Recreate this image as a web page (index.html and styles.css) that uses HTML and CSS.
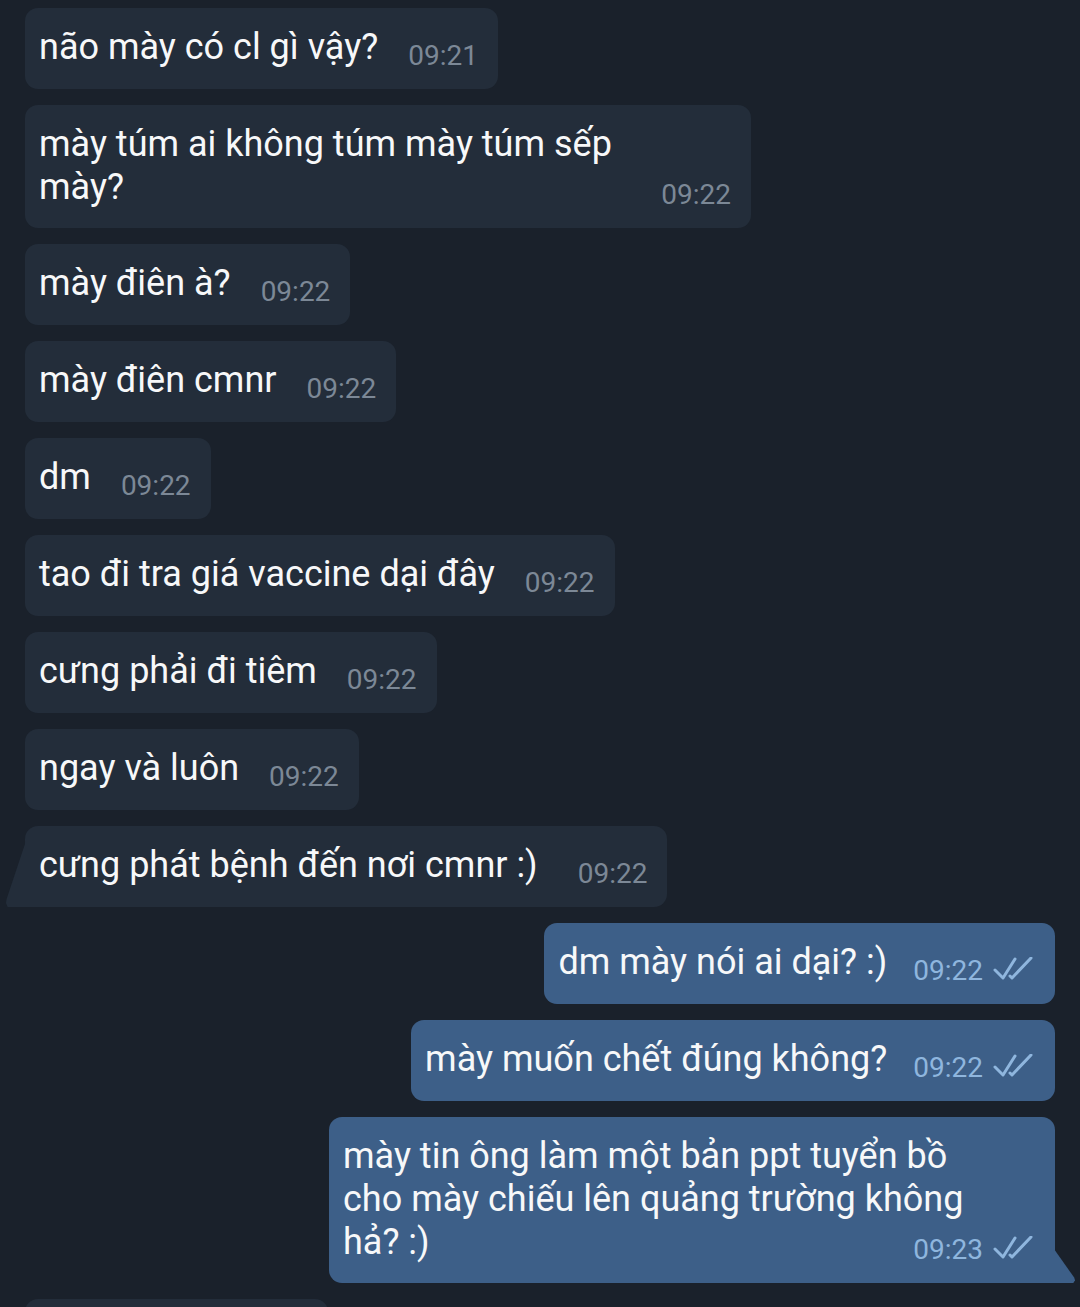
FILE: index.html
```html
<!DOCTYPE html>
<html lang="vi">
<head>
<meta charset="utf-8">
<title>Chat</title>
<link rel="stylesheet" href="styles.css">
</head>
<body>
<main class="chat">
  <div class="row in"><div class="bubble"><span class="text">não mày có cl gì vậy?</span><span class="meta"><span class="time">09:21</span></span></div></div>
  <div class="row in"><div class="bubble wide"><span class="text">mày túm ai không túm mày túm sếp mày?</span><span class="meta"><span class="time">09:22</span></span></div></div>
  <div class="row in"><div class="bubble"><span class="text">mày điên à?</span><span class="meta"><span class="time">09:22</span></span></div></div>
  <div class="row in"><div class="bubble"><span class="text">mày điên cmnr</span><span class="meta"><span class="time">09:22</span></span></div></div>
  <div class="row in"><div class="bubble"><span class="text">dm</span><span class="meta"><span class="time">09:22</span></span></div></div>
  <div class="row in"><div class="bubble"><span class="text">tao đi tra giá vaccine dại đây</span><span class="meta"><span class="time">09:22</span></span></div></div>
  <div class="row in"><div class="bubble"><span class="text">cưng phải đi tiêm</span><span class="meta"><span class="time">09:22</span></span></div></div>
  <div class="row in"><div class="bubble"><span class="text">ngay và luôn</span><span class="meta"><span class="time">09:22</span></span></div></div>
  <div class="row in"><div class="bubble tail"><span class="text">cưng phát bệnh đến nơi cmnr :)</span><span class="meta wider"><span class="time">09:22</span></span></div></div>

  <div class="row out"><div class="bubble"><span class="text">dm mày nói ai dại? :)</span><span class="meta"><span class="time">09:22</span><svg class="checks" viewBox="0 0 40 24" width="40" height="24"><path d="M2 13 L10 21 L22 2"/><path d="M17 19 L19 21 L38 1"/></svg></span></div></div>
  <div class="row out"><div class="bubble"><span class="text">mày muốn chết đúng không?</span><span class="meta"><span class="time">09:22</span><svg class="checks" viewBox="0 0 40 24" width="40" height="24"><path d="M2 13 L10 21 L22 2"/><path d="M17 19 L19 21 L38 1"/></svg></span></div></div>
  <div class="row out"><div class="bubble wide tail"><span class="text">mày tin ông làm một bản ppt tuyển bồ cho mày chiếu lên quảng trường không hả? :)</span><span class="meta"><span class="time">09:23</span><svg class="checks" viewBox="0 0 40 24" width="40" height="24"><path d="M2 13 L10 21 L22 2"/><path d="M17 19 L19 21 L38 1"/></svg></span></div></div>

  <div class="row in"><div class="bubble cut"></div></div>
</main>
</body>
</html>
```
FILE: styles.css
```css
html, body {
  margin: 0;
  padding: 0;
  background: #1a212b;
  overflow: hidden;
}

.chat {
  display: flex;
  flex-direction: column;
  gap: 16px;
  padding: 8px 25px 0 25px;
  font-family: Roboto, "Noto Sans", sans-serif;
}

.row {
  display: flex;
}

.row.in { justify-content: flex-start; }
.row.out { justify-content: flex-end; }

.bubble {
  position: relative;
  display: flex;
  align-items: flex-end;
  box-sizing: border-box;
  max-width: 726px;
  padding: 18px 20px 20px 14px;
  border-radius: 13px;
  background: #232d3a;
  color: #f7f8f9;
}

.row.out .bubble {
  background: #3d5f88;
  padding-right: 22px;
}

.bubble.cut {
  width: 303px;
  height: 81px;
}

.text {
  font-size: 36px;
  line-height: 43px;
  flex: 0 1 auto;
}

.meta {
  display: flex;
  align-items: center;
  flex: none;
  margin-left: auto;
  padding-left: 30px;
  margin-bottom: -1px;
  line-height: 28px;
}

.meta.wider {
  padding-left: 40px;
}

.row.out .meta {
  padding-left: 26px;
}

/* multi-line bubbles: text wraps at 640px, time floats on the last line */
.bubble.wide,
.row.out .bubble.wide {
  display: flow-root;
  width: 726px;
  padding-right: 72px;
  padding-bottom: 19px;
}

.bubble.wide .meta {
  float: right;
  margin: 15px -52px 0 0;
}

.row.out .bubble.wide .meta {
  margin-right: -50px;
}

.time {
  font-size: 28px;
  line-height: 28px;
  color: #7c8896;
}

.row.out .time {
  color: #8fb6de;
}

.checks {
  margin-left: 10px;
  margin-top: -4px;
  fill: none;
  stroke: #8fb6de;
  stroke-width: 3;
  stroke-linecap: round;
  stroke-linejoin: round;
}

/* bubble tails */
.row.in .bubble.tail {
  border-bottom-left-radius: 0;
}

.row.in .bubble.tail::before {
  content: "";
  position: absolute;
  left: -19px;
  bottom: 0;
  width: 20px;
  height: 66px;
  background: #232d3a;
  clip-path: polygon(100% 0, 100% 100%, 8% 100%, 0 94%, 3% 88%);
}

.row.out .bubble.tail {
  border-bottom-right-radius: 0;
}

.row.out .bubble.tail::after {
  content: "";
  position: absolute;
  right: -20px;
  bottom: 0;
  width: 21px;
  height: 34px;
  background: #3d5f88;
  clip-path: polygon(0 0, 96% 84%, 100% 92%, 92% 100%, 0 100%);
}
```
